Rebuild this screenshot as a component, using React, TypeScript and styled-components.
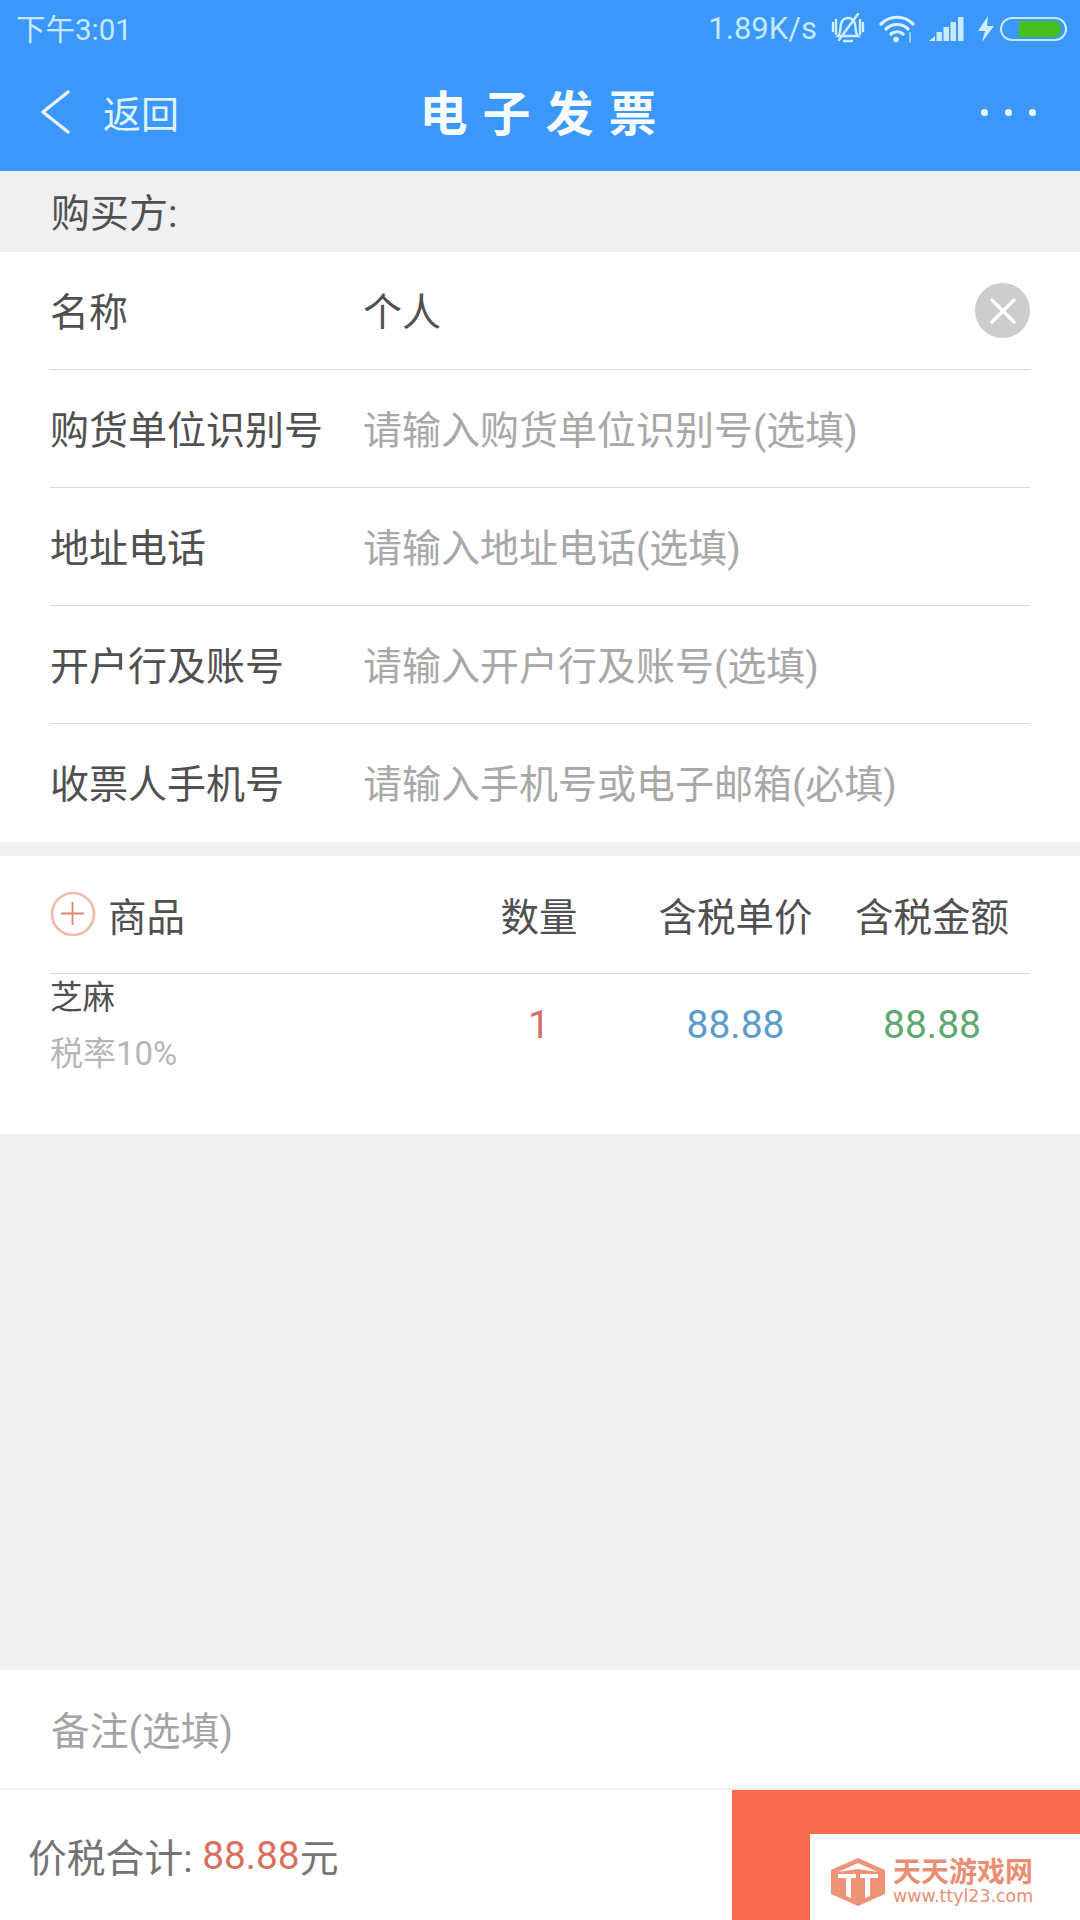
import { createGlobalStyle, styled } from "styled-components";

const GlobalStyle = createGlobalStyle`
  html, body {
    margin: 0;
    padding: 0;
    background: #f0f0f0;
  }
  * {
    box-sizing: border-box;
  }
  body {
    font-family: Roboto, "Noto Sans CJK SC", sans-serif;
  }
`;

const buyerRows = [
  { label: "购货单位识别号", hint: "请输入购货单位识别号(选填)" },
  { label: "地址电话", hint: "请输入地址电话(选填)" },
  { label: "开户行及账号", hint: "请输入开户行及账号(选填)" },
  { label: "收票人手机号", hint: "请输入手机号或电子邮箱(必填)" },
];

const App = () => {
  return (
    <Page>
      <GlobalStyle />
      <Header>
        <StatusBar>
          <StatusTime>下午3:01</StatusTime>
          <StatusRight>
            <span>1.89K/s</span>
            <BellIcon />
            <WifiIcon />
            <SignalIcon />
            <BoltIcon />
            <Battery>
              <BatteryFill />
            </Battery>
          </StatusRight>
        </StatusBar>
        <NavBar>
          <BackButton>
            <svg width="30" height="44" viewBox="0 0 30 44" fill="none">
              <path d="M28 2 L3 22 L28 42" stroke="#e6f6ff" strokeWidth="3.4" strokeLinecap="round" strokeLinejoin="round" />
            </svg>
            <span>返回</span>
          </BackButton>
          <Title>电子发票</Title>
          <MoreDots>
            <Dot />
            <Dot />
            <Dot />
          </MoreDots>
        </NavBar>
      </Header>

      <SectionLabel>购买方:</SectionLabel>

      <FormCard>
        <FormRow>
          <RowLabel>名称</RowLabel>
          <RowValue>个人</RowValue>
          <ClearButton>
            <svg width="26" height="26" viewBox="0 0 26 26" fill="none">
              <path d="M2 2 L24 24 M24 2 L2 24" stroke="#fff" strokeWidth="3.4" strokeLinecap="round" />
            </svg>
          </ClearButton>
        </FormRow>
        {buyerRows.map((row) => (
          <FormRow key={row.label}>
            <RowLabel>{row.label}</RowLabel>
            <RowHint>{row.hint}</RowHint>
          </FormRow>
        ))}
      </FormCard>

      <GoodsCard>
        <GoodsHead>
          <GoodsName>
            <svg width="46" height="46" viewBox="0 0 46 46" fill="none">
              <circle cx="23" cy="23" r="21" stroke="#efb9ac" strokeWidth="2.6" />
              <path d="M11 22.5 H34 M22.5 11 V34" stroke="#e0836f" strokeWidth="1.8" />
            </svg>
            <span>商品</span>
          </GoodsName>
          <HeadCell>数量</HeadCell>
          <HeadCell>含税单价</HeadCell>
          <HeadCell>含税金额</HeadCell>
        </GoodsHead>
        <GoodsItem>
          <ItemInfo>
            <ItemName>芝麻</ItemName>
            <ItemTax>税率10%</ItemTax>
          </ItemInfo>
          <ItemValue $color="#cf7266">1</ItemValue>
          <ItemValue $color="#5b9cc9">88.88</ItemValue>
          <ItemValue $color="#5da873">88.88</ItemValue>
        </GoodsItem>
      </GoodsCard>

      <Spacer />

      <RemarkRow>备注(选填)</RemarkRow>

      <BottomBar>
        <Total>
          价税合计: <TotalPrice>88.88</TotalPrice>元
        </Total>
        <SubmitButton />
        <Watermark>
          <svg width="54" height="48" viewBox="0 0 54 48">
            <path d="M27 0 L54 12 V36 L27 48 L0 36 V12 Z" fill="#ee9378" />
            <path d="M27 5 L47 14 L27 11 L7 14 Z" fill="#fff" />
            <path d="M7 16 H25 V20 H20 V40 L15 38 V20 H7 Z M29 16 H47 V20 H39 V38 L34 40 V20 H29 Z" fill="#fff" />
          </svg>
          <WatermarkText>
            <WatermarkName>天天游戏网</WatermarkName>
            <WatermarkUrl>www.ttyl23.com</WatermarkUrl>
          </WatermarkText>
        </Watermark>
      </BottomBar>
    </Page>
  );
};

const BellIcon = () => (
  <svg width="34" height="32" viewBox="0 0 34 32" fill="none" stroke="#cfeeff" strokeWidth="2.4" strokeLinecap="round">
    <path d="M7 23 C10 20 9 15 10 11 C11 7 14 5 17 5 C20 5 23 7 24 11 C25 15 24 20 27 23 Z" />
    <path d="M13 28 H21" />
    <path d="M27 1 L8 27" />
    <path d="M2 10 V18 M5 7 V21 M29 7 V21 M32 10 V18" />
  </svg>
);

const WifiIcon = () => (
  <svg width="36" height="28" viewBox="0 0 36 28" fill="none" stroke="#d8f1ff" strokeWidth="3.2" strokeLinecap="round">
    <path d="M2 9 C11 0 25 0 34 9" />
    <path d="M7 14 C13 8 23 8 29 14" />
    <path d="M12 19 C15 16 21 16 24 19" />
    <circle cx="17" cy="24.5" r="2.8" fill="#d8f1ff" stroke="none" />
    <path d="M31 18 V27" stroke="#9fd0f7" strokeWidth="1.8" />
  </svg>
);

const SignalIcon = () => (
  <svg width="35" height="24" viewBox="0 0 35 24" fill="#cbe9fc">
    <path d="M0 24 L6 19 V24 Z" />
    <rect x="7.5" y="15" width="5.5" height="9" />
    <rect x="14.5" y="10" width="5.5" height="14" />
    <rect x="21.5" y="5" width="5.5" height="19" />
    <rect x="29" y="0" width="5.5" height="24" />
  </svg>
);

const BoltIcon = () => (
  <svg width="16" height="26" viewBox="0 0 16 26" fill="#cfeeff">
    <path d="M10 0 L0 15 H7 L4 26 L16 10 H9 Z" />
  </svg>
);

export default App;

const Page = styled.div`
  width: 1080px;
  height: 1920px;
  display: flex;
  flex-direction: column;
  background: #f0f0f0;
  overflow: hidden;
`;

const Header = styled.header`
  height: 171px;
  background: #3c97fa;
`;

const StatusBar = styled.div`
  height: 57px;
  padding: 0 13px 0 16px;
  display: flex;
  align-items: center;
  justify-content: space-between;
  color: #c4e9fd;
  font-size: 29.5px;
`;

const StatusTime = styled.span`
  margin-top: -3px;
`;

const StatusRight = styled.div`
  display: flex;
  align-items: center;
  gap: 14px;

  span {
    font-size: 31px;
  }
`;

const Battery = styled.div`
  width: 67px;
  height: 24px;
  margin-left: -8px;
  padding: 2px 4px 2px 17px;
  border: 2px solid #c4e9fd;
  border-radius: 12px;
`;

const BatteryFill = styled.div`
  height: 100%;
  background: #45bf1b;
  border-radius: 0 9px 9px 0;
`;

const NavBar = styled.div`
  height: 114px;
  padding: 0 44px 4px 40px;
  display: grid;
  grid-template-columns: 1fr auto 1fr;
  align-items: center;
`;

const BackButton = styled.div`
  display: flex;
  align-items: center;
  gap: 33px;
  color: #dcf4ff;
  font-size: 38px;

  span {
    margin-top: -2px;
  }
`;

const Title = styled.h1`
  margin: -4px -15px 0 0;
  color: #f4fcff;
  font-size: 48px;
  font-weight: 700;
  letter-spacing: 15px;
`;

const MoreDots = styled.div`
  justify-self: end;
  display: flex;
  gap: 17px;
`;

const Dot = styled.span`
  width: 7px;
  height: 7px;
  border-radius: 50%;
  background: #f4fcff;
`;

const SectionLabel = styled.div`
  height: 81px;
  padding: 0 0 4px 51px;
  display: flex;
  align-items: center;
  color: #505050;
  font-size: 39px;
`;

const FormCard = styled.section`
  height: 590px;
  padding-left: 50px;
  padding-right: 50px;
  background: #fff;
`;

const FormRow = styled.div`
  height: 118px;
  display: flex;
  align-items: center;
  border-bottom: 1.5px solid #dcdcdc;

  &:last-child {
    border-bottom: none;
  }
`;

const RowLabel = styled.span`
  width: 313px;
  flex-shrink: 0;
  margin-top: -4px;
  color: #505050;
  font-size: 39px;
`;

const RowValue = styled.span`
  flex: 1;
  margin-top: -4px;
  color: #505050;
  font-size: 39px;
`;

const RowHint = styled.span`
  flex: 1;
  margin-top: -4px;
  color: #a8a8a8;
  font-size: 39px;
  white-space: nowrap;
`;

const ClearButton = styled.div`
  width: 55px;
  height: 55px;
  border-radius: 50%;
  background: #cdcdcd;
  display: flex;
  align-items: center;
  justify-content: center;
`;

const GoodsCard = styled.section`
  height: 278px;
  margin-top: 14px;
  padding: 0 50px;
  background: #fff;
`;

const GoodsHead = styled.div`
  height: 118px;
  padding-bottom: 1px;
  display: grid;
  grid-template-columns: 391px 196px 197px 196px;
  align-items: center;
  border-bottom: 1.5px solid #dcdcdc;
`;

const GoodsName = styled.div`
  display: flex;
  align-items: center;
  gap: 12px;
  color: #505050;
  font-size: 38.5px;

  svg {
    margin-top: -1px;
  }
`;

const HeadCell = styled.div`
  text-align: center;
  color: #505050;
  font-size: 38.5px;
  white-space: nowrap;
`;

const GoodsItem = styled.div`
  display: grid;
  grid-template-columns: 391px 196px 197px 196px;
  align-items: start;
`;

const ItemInfo = styled.div`
  padding-top: 1px;
  display: flex;
  flex-direction: column;
  gap: 10px;
`;

const ItemName = styled.div`
  color: #505050;
  font-size: 32.5px;
  line-height: 46px;
`;

const ItemTax = styled.div`
  color: #b6b6b6;
  font-size: 33px;
  line-height: 46px;
`;

const ItemValue = styled.div<{ $color: string }>`
  padding-top: 28px;
  text-align: center;
  color: ${(p) => p.$color};
  font-size: 39px;
  line-height: 46px;
`;

const Spacer = styled.div`
  flex: 1;
`;

const RemarkRow = styled.div`
  height: 118px;
  padding: 0 0 2px 51px;
  display: flex;
  align-items: center;
  background: #fff;
  color: #a4a4a4;
  font-size: 38.8px;
`;

const BottomBar = styled.div`
  position: relative;
  height: 132px;
  display: flex;
  background: #fff;
  border-top: 2px solid #efefef;
`;

const Total = styled.div`
  width: 732px;
  padding-left: 28px;
  display: flex;
  align-items: center;
  white-space: pre;
  color: #747474;
  font-size: 38.8px;
`;

const TotalPrice = styled.span`
  color: #d9705f;
`;

const SubmitButton = styled.div`
  flex: 1;
  background: #fa6a50;
`;

const Watermark = styled.div`
  position: absolute;
  right: 0;
  bottom: 0;
  width: 270px;
  height: 86px;
  padding: 24px 0 0 21px;
  display: flex;
  align-items: flex-start;
  gap: 8px;
  background: #fff;
`;

const WatermarkText = styled.div`
  display: flex;
  flex-direction: column;
  padding-top: 1px;
  color: #ea8e73;
`;

const WatermarkName = styled.div`
  font-size: 28px;
  font-weight: 700;
  line-height: 28px;
  letter-spacing: 0;
  white-space: nowrap;
`;

const WatermarkUrl = styled.div`
  font-family: "DejaVu Sans", sans-serif;
  font-size: 17.4px;
  line-height: 18px;
  white-space: nowrap;
`;
